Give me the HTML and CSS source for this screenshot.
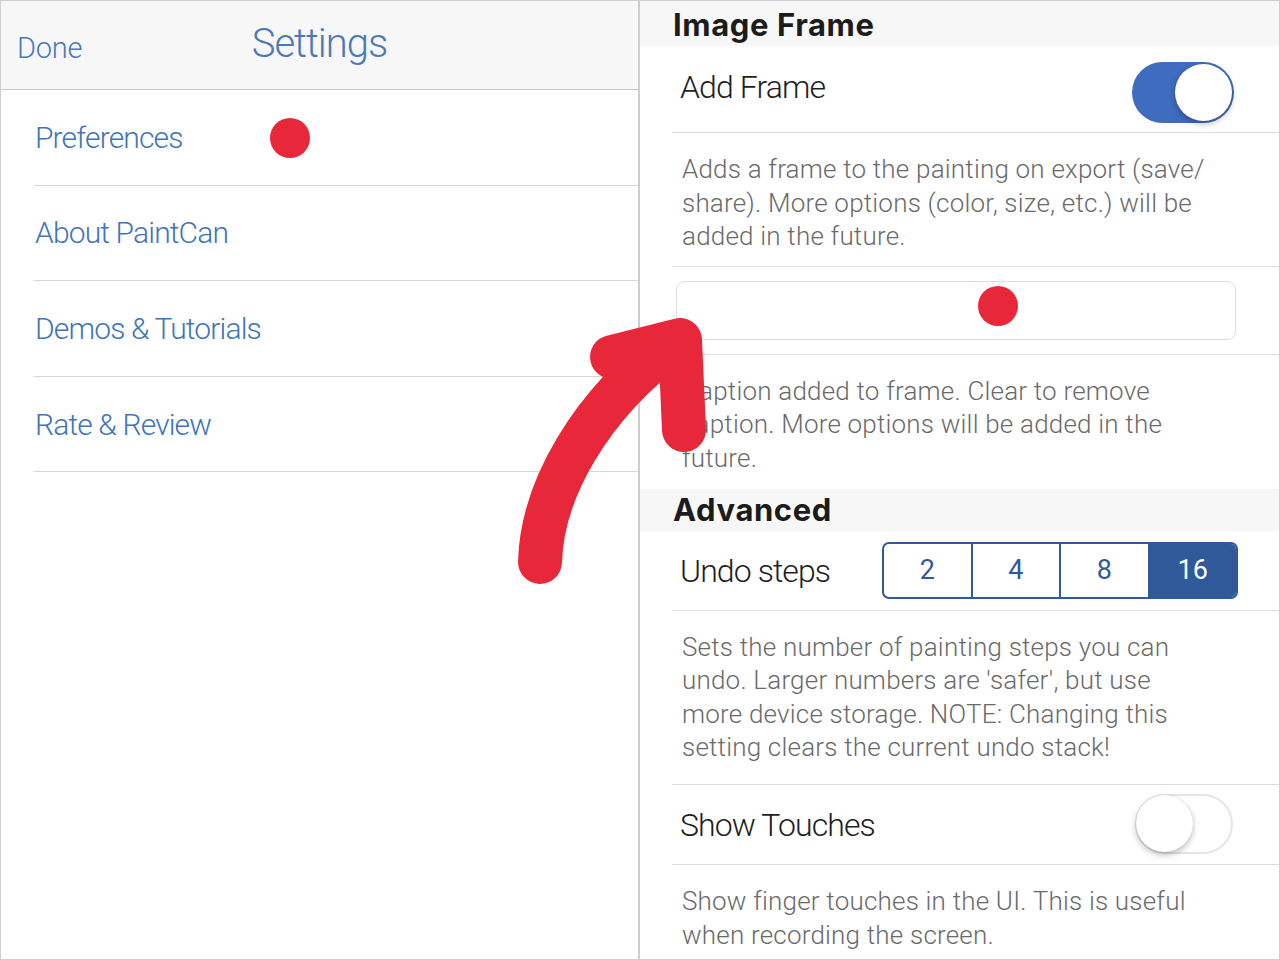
FILE: index.html
```html
<!DOCTYPE html>
<html>
<head>
<meta charset="utf-8">
<link rel="stylesheet" href="styles.css">
</head>
<body>
<div class="screen">
  <div class="master">
    <div class="navbar">
      <span class="nav-done">Done</span>
      <span class="nav-title">Settings</span>
      <span></span>
    </div>
    <div class="menu">
      <div class="menu-item">Preferences</div>
      <div class="menu-item">About PaintCan</div>
      <div class="menu-item">Demos &amp; Tutorials</div>
      <div class="menu-item">Rate &amp; Review</div>
    </div>
  </div>
  <div class="detail">
    <div class="section-header first">Image Frame</div>
    <div class="cell cell-tall">
      <span class="cell-label">Add Frame</span>
      <span class="toggle on"><span class="knob"></span></span>
    </div>
    <div class="cell-note">Adds a frame to the painting on export (save/<br>share). More options (color, size, etc.) will be<br>added in the future.</div>
    <div class="cell cell-field">
      <div class="text-field"></div>
    </div>
    <div class="cell-note last">Caption added to frame. Clear to remove<br>caption. More options will be added in the<br>future.</div>
    <div class="section-header">Advanced</div>
    <div class="cell">
      <span class="cell-label">Undo steps</span>
      <div class="segmented">
        <span class="seg">2</span>
        <span class="seg">4</span>
        <span class="seg">8</span>
        <span class="seg selected">16</span>
      </div>
    </div>
    <div class="cell-note tall">Sets the number of painting steps you can<br>undo. Larger numbers are 'safer', but use<br>more device storage. NOTE: Changing this<br>setting clears the current undo stack!</div>
    <div class="cell cell-switch">
      <span class="cell-label">Show Touches</span>
      <span class="toggle off"><span class="knob"></span></span>
    </div>
    <div class="cell-note end">Show finger touches in the UI. This is useful<br>when recording the screen.</div>
  </div>
  <svg class="annotations" width="1280" height="960" viewBox="0 0 1280 960">
    <circle cx="290" cy="138" r="20" fill="#e8283a"/>
    <circle cx="998" cy="306" r="20" fill="#e8283a"/>
    <path d="M540 562 C542 490 590 405 675 342" fill="none" stroke="#e8283a" stroke-width="44" stroke-linecap="round"/>
    <path d="M612 357 L680 340 L684 430" fill="none" stroke="#e8283a" stroke-width="44" stroke-linecap="round" stroke-linejoin="round"/>
  </svg>
</div>
</body>
</html>
```
FILE: styles.css
```css
* { box-sizing: border-box; }
html, body { margin: 0; padding: 0; background: #fff; }
body { font-family: Roboto, "Liberation Sans", sans-serif; font-weight: 300; color: #1e1e1e; }

.screen {
  position: relative;
  width: 1280px;
  height: 960px;
  display: flex;
  border: 1px solid #cfcfcf;
  overflow: hidden;
}

.master {
  width: 639px;
  flex: none;
  border-right: 2px solid #cdcdcd;
}

.navbar {
  height: 89px;
  background: #f7f7f7;
  border-bottom: 1px solid #c6c6c6;
  display: grid;
  grid-template-columns: 1fr auto 1fr;
  align-items: center;
  color: #4a78bb;
}
.nav-done { font-size: 29px; padding-left: 16px; padding-top: 5px; letter-spacing: -0.2px; }
.nav-title { font-size: 40px; letter-spacing: -1px; padding-bottom: 3px; }

.menu { padding-left: 33px; }
.menu-item {
  height: 95.6px;
  border-bottom: 1px solid #d6d6d6;
  display: flex;
  align-items: center;
  padding-left: 1px;
  font-size: 30px;
  letter-spacing: -0.85px;
  color: #3f74ba;
}

.detail { flex: 1; min-width: 0; }

.section-header {
  height: 42px;
  background: #f7f7f7;
  padding-left: 33px;
  font-family: Inter, Roboto, sans-serif;
  font-weight: 700;
  font-size: 31px;
  letter-spacing: 0.6px;
  color: #1c1c1c;
  display: flex;
  align-items: center;
}
.section-header.first { height: 45px; padding-top: 2px; }

.cell {
  margin-left: 32px;
  height: 80px;
  border-bottom: 1px solid #dcdcdc;
  padding-left: 8px;
  padding-right: 41px;
  display: flex;
  align-items: center;
  justify-content: space-between;
}
.cell-tall { height: 87px; padding-right: 45px; }
.cell-tall .cell-label { margin-bottom: 7px; }
.cell-tall .toggle { margin-top: 6px; }
.cell-switch { padding-right: 46px; }
.cell-field { height: 88px; padding-left: 4px; padding-right: 43px; }
.cell-label { font-size: 32px; letter-spacing: -0.9px; color: #1e1e1e; padding-top: 2px; }

.cell-note {
  margin-left: 32px;
  padding: 20px 20px 12px 10px;
  border-bottom: 1px solid #dcdcdc;
  font-size: 26px;
  letter-spacing: 0.2px;
  line-height: 33.6px;
  color: #6a6a6a;
  white-space: nowrap;
}
.cell-note.last { border-bottom: none; padding-bottom: 13px; }
.cell-note.tall { padding-bottom: 19px; }
.cell-note.end { border-bottom: none; }

.text-field {
  width: 100%;
  height: 59px;
  border: 1px solid #dedede;
  border-radius: 9px;
}

.toggle {
  position: relative;
  width: 102px;
  height: 61px;
  border-radius: 31px;
  flex: none;
}
.toggle.on { background: #3f6cbf; }
.toggle.off { background: #fff; border: 2px solid #e6e6e6; width: 98px; height: 60px; }
.toggle .knob {
  position: absolute;
  top: 2px;
  width: 57px;
  height: 57px;
  border-radius: 50%;
  background: #fff;
  box-shadow: 0 3px 6px rgba(0,0,0,0.25), 0 0 1px rgba(0,0,0,0.2);
}
.toggle.on .knob { right: 2px; }
.toggle.off .knob { left: -1px; top: -1px; }

.segmented {
  display: flex;
  width: 356px;
  height: 57px;
  border: 2px solid #30599a;
  border-radius: 7px;
  overflow: hidden;
}
.seg {
  flex: 1;
  display: flex;
  align-items: center;
  justify-content: center;
  font-size: 27px;
  font-weight: 400;
  color: #30599a;
  border-left: 2px solid #30599a;
}
.seg:first-child { border-left: none; }
.seg.selected { background: #30599a; color: #fff; }

.annotations {
  position: absolute;
  left: -1px;
  top: -1px;
  pointer-events: none;
}
```
